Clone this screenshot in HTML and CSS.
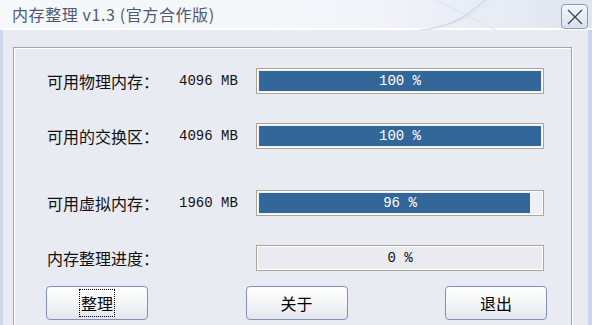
FILE: index.html
```html
<!DOCTYPE html>
<html lang="zh-CN">
  <head>
    <meta charset="UTF-8" />
    <meta name="viewport" content="width=device-width, initial-scale=1.0" />
    <title>内存整理 v1.3 (官方合作版)</title>
    <link rel="stylesheet" href="styles.css">
  </head>
  <body>
    <div class="window">
      <div class="titlebar">
        <span class="title">内存整理 v1.3 (官方合作版)</span>
        <svg class="swoosh" width="120" height="30" viewBox="0 0 120 30">
          <path d="M0 32 C40 30 60 22 80 4 L86 -2" fill="none" stroke="#c9d1e6" stroke-width="1" />
          <path d="M4 32 C44 30 64 20 84 2 L90 -2" fill="none" stroke="#d3daec" stroke-width="1" />
          <path d="M10 32 C50 28 70 18 92 0" fill="none" stroke="#dbe1f0" stroke-width="1" />
          <path d="M30 -2 C50 6 70 18 100 32" fill="none" stroke="#dde3f0" stroke-width="1" />
        </svg>
        <button class="close" type="button">
          <svg width="18" height="18" viewBox="0 0 18 18">
            <path d="M2 2 L16 16 M16 2 L2 16" stroke="#3c4250" stroke-width="1.3" fill="none" />
          </svg>
        </button>
      </div>
      <div class="content">
        <div class="group">
          <div class="row">
            <span class="label">可用物理内存：</span>
            <span class="value">4096 MB</span>
            <div class="bar"><div class="fill" style="width: 100%"></div><span class="pct">100 %</span></div>
          </div>
          <div class="row">
            <span class="label">可用的交换区：</span>
            <span class="value">4096 MB</span>
            <div class="bar"><div class="fill" style="width: 100%"></div><span class="pct">100 %</span></div>
          </div>
          <div class="row row-virtual">
            <span class="label">可用虚拟内存：</span>
            <span class="value">1960 MB</span>
            <div class="bar"><div class="fill" style="width: 96%"></div><span class="pct">96 %</span></div>
          </div>
          <div class="row">
            <span class="label">内存整理进度：</span>
            <span class="value"></span>
            <div class="bar bar-empty"><div class="fill" style="width: 0%"></div><span class="pct">0 %</span></div>
          </div>
          <div class="buttons">
            <button type="button" class="btn"><span class="focus">整理</span></button>
            <button type="button" class="btn">关于</button>
            <button type="button" class="btn">退出</button>
          </div>
        </div>
      </div>
    </div>
  </body>
</html>
```

FILE: styles.css
```css
body {
  margin: 0;
  font-family: "Noto Sans CJK SC", "DejaVu Sans", sans-serif;
  background-color: #e9ebf3;
}
.window {
  width: 592px;
  height: 325px;
  overflow: hidden;
  background-color: #e9ebf3;
}
.titlebar {
  position: relative;
  height: 28px;
  border-bottom: 2px solid #ffffff;
  background: linear-gradient(to right, #f7f8fb 0%, #f3f5fa 60%, #dfe5f1 100%);
  display: flex;
  align-items: center;
  padding-left: 12px;
}
.title {
  font-size: 16px;
  color: #4e5a72;
  line-height: 28px;
  letter-spacing: 0.6px;
}
.swoosh {
  position: absolute;
  left: 400px;
  top: 0;
}
.close {
  position: absolute;
  right: 4px;
  top: 4px;
  width: 27px;
  height: 25px;
  padding: 0;
  border: 1px solid #8c98b4;
  border-radius: 4px;
  background: linear-gradient(#f4f6fb, #d9e0ee);
  display: flex;
  align-items: center;
  justify-content: center;
}
.content {
  height: 295px;
  border-left: 3px solid #cdd5ea;
  border-right: 4px solid #cbd4ee;
  padding: 17px 0 0 10px;
}
.group {
  width: 559px;
  height: 300px;
  border: 1px solid #a2a2a6;
  box-shadow: inset 1px 1px 0 #ffffff, 1px 1px 0 #ffffff;
  padding: 20px 0 0 32px;
  box-sizing: border-box;
}
.row {
  display: grid;
  grid-template-columns: 133px 77px 288px;
  align-items: center;
  height: 26px;
}
.row + .row {
  margin-top: 29px;
}
.row.row-virtual {
  margin-top: 41px;
}
.label {
  font-size: 16px;
  color: #111111;
  padding-left: 1px;
  white-space: nowrap;
}
.value,
.pct {
  font-family: "Liberation Mono", "DejaVu Sans Mono", monospace;
  font-size: 14px;
  color: #111111;
}
.bar {
  position: relative;
  height: 26px;
  border: 1px solid #aba595;
  box-shadow: inset 0 0 0 1px #ffffff;
  box-sizing: border-box;
  padding: 2px;
  background-color: #eef0f5;
}
.fill {
  height: 100%;
  background-color: #336699;
}
.pct {
  position: absolute;
  left: 0;
  right: 0;
  top: 0;
  line-height: 24px;
  text-align: center;
  color: #ffffff;
}
.bar-empty {
  background-color: #e9ebf1;
}
.bar-empty .pct {
  color: #111111;
}
.buttons {
  display: flex;
  justify-content: space-between;
  width: 501px;
  margin-top: 15px;
}
.btn {
  width: 102px;
  height: 34px;
  border: 1px solid #8090b8;
  border-radius: 4px;
  background: linear-gradient(#ffffff 0%, #f4f5f8 50%, #e4e6ec 100%);
  font-family: "Noto Sans CJK SC", sans-serif;
  font-size: 16px;
  color: #000000;
  padding: 0;
}
.focus {
  outline: 1px dotted #000000;
  outline-offset: 0;
  padding: 1px 1px;
}
```
